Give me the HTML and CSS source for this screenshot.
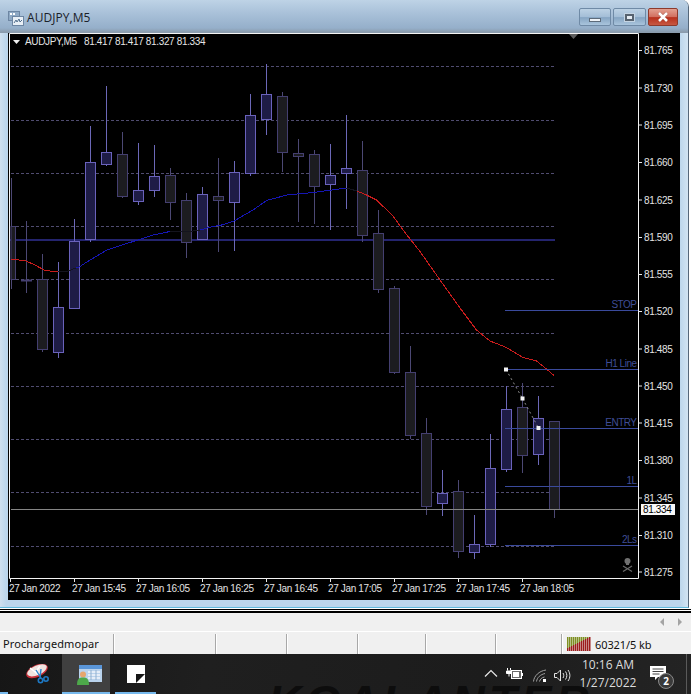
FILE: index.html
```html
<!DOCTYPE html>
<html lang="en">
<head>
<meta charset="utf-8">
<title>AUDJPY,M5</title>
<link rel="stylesheet" href="styles.css">
</head>
<body>
<div class="desk">
  <div class="window">
    <div class="titlebar">
      <svg class="app-icon" width="16" height="16" viewBox="0 0 16 16">
        <rect x="0.5" y="1.5" width="11" height="9" fill="#8fa9c4" stroke="#6d86a3"/>
        <rect x="2" y="3" width="2" height="2" fill="#fff"/><rect x="5" y="3" width="2" height="2" fill="#fff"/>
        <rect x="4.5" y="6.5" width="11" height="9" fill="#e8eff6" stroke="#6d86a3"/>
        <path d="M6 13l2-3 1 2 2-3 1 3 2-2" fill="none" stroke="#52708f"/>
      </svg>
      <span class="title">AUDJPY,M5</span>
      <div class="winbtns">
        <div class="winbtn min"><span class="glyph-min"></span></div>
        <div class="winbtn max"><span class="glyph-max"></span></div>
        <div class="winbtn close">
          <svg width="12" height="10" viewBox="0 0 12 10"><path d="M2 1l8 8M10 1l-8 8" stroke="#6e2a20" stroke-width="3.600" opacity=".45"/><path d="M2 1l8 8M10 1l-8 8" stroke="#fff" stroke-width="2.600"/></svg>
        </div>
      </div>
    </div>
    <div class="chart">
      <svg id="plot" class="plot" width="672" height="567" viewBox="8 33 672 567"></svg>
    </div>
  </div>
  <div class="rule"></div>
  <div class="scrollrow">
    <span class="arrow left"></span>
    <span class="arrow right"></span>
  </div>
  <div class="status">
    <div class="cell name">Prochargedmopar</div>
    <div class="cell w102"></div>
    <div class="cell w71"></div>
    <div class="cell w71"></div>
    <div class="cell w68"></div>
    <div class="cell w70"></div>
    <div class="cell w66"></div>
    <div class="cell conn">
      <svg id="bars" width="24" height="14" viewBox="0 0 24 14"></svg>
      <span>60321/5 kb</span>
    </div>
  </div>
  <div class="taskbar">
    <span class="watermark">KGALANTER</span>
    <div class="apps">
      <div class="start-stub"></div>
      <div class="tb-app snip">
        <svg width="26" height="26" viewBox="0 0 26 26">
          <ellipse cx="12" cy="7" rx="11.500" ry="6" transform="rotate(-24 12 7)" fill="#c9303a"/>
          <ellipse cx="12" cy="6.300" rx="10.500" ry="4.800" transform="rotate(-24 12 6.300)" fill="#efe4e0"/>
          <path d="M5 4l9 7M15 2l-5 7" stroke="#fff" stroke-width="1.400"/>
          <path d="M11 6l5 8M16 5l-1 9" stroke="#2a86cf" stroke-width="1.400"/>
          <circle cx="15.500" cy="16.500" r="2.200" fill="none" stroke="#1d78c4" stroke-width="1.600"/>
          <circle cx="21" cy="15" r="2.200" fill="none" stroke="#1d78c4" stroke-width="1.600"/>
        </svg>
      </div>
      <div class="tb-app active">
        <svg width="25" height="20" viewBox="0 0 25 20">
          <rect x="2" y="0" width="23" height="17" fill="#b9d2ec"/>
          <rect x="2" y="0" width="23" height="4" fill="#5a96d8"/>
          <path d="M11 7h12M11 10h12M11 13h12" stroke="#f2f6fb" stroke-width="1.500"/>
          <path d="M14 5v10M19 5v10" stroke="#8fb0d0"/>
          <circle cx="6" cy="9.500" r="3" fill="#e6a66e"/>
          <path d="M0 20c0-6 2-7.500 6-7.500s6 1.500 6 7.500z" fill="#4da84a"/>
        </svg>
      </div>
      <div class="tb-app third">
        <svg width="18" height="18" viewBox="0 0 18 18">
          <rect width="18" height="18" fill="#fff"/>
          <path d="M9 9H18L9 18z" fill="#161616"/>
        </svg>
      </div>
    </div>
    <div class="tray">
      <svg class="chev" width="14" height="8" viewBox="0 0 14 8"><path d="M1 7.500l6-6 6 6" fill="none" stroke="#e8e8e8" stroke-width="1.200"/></svg>
      <svg class="batt" width="17" height="12" viewBox="0 0 17 12">
        <path d="M1.500 0v2.500M4.500 0v2.500" stroke="#fff"/>
        <path d="M0.500 3h5v2.500h-5zM3 5.500v3" stroke="#fff" fill="#fff"/>
        <rect x="5.500" y="2.500" width="10" height="8" fill="#6a6a6a" stroke="#fff"/><rect x="7" y="4" width="6" height="5" fill="#fff"/><rect x="15.500" y="5" width="1.500" height="3" fill="#fff"/>
      </svg>
      <svg class="wifi" width="14" height="13" viewBox="0 0 14 13">
        <path d="M0.500 12.500C1 7 6 2 13 1M3.500 12.500c.5-4 4-7 8.500-8M6.500 12.500c.5-2 2-4 5-4.500" fill="none" stroke="#a0a0a0"/>
        <rect x="10" y="10" width="3" height="3" fill="#fff"/>
      </svg>
      <svg class="vol" width="17" height="13" viewBox="0 0 17 13">
        <path d="M0.500 4.500h2.500l3.500-3.500v11l-3.500-3.500h-2.500z" fill="none" stroke="#e6e6e6"/>
        <path d="M9 4c1 1.500 1 3.500 0 5M11.500 2.500c1.800 2.500 1.800 5.500 0 8M14 1c2.500 3.500 2.500 7.500 0 11" fill="none" stroke="#e6e6e6"/>
      </svg>
      <div class="clock"><span>10:16 AM</span><span>1/27/2022</span></div>
      <div class="notif">
        <svg width="17" height="15" viewBox="0 0 17 15"><path d="M0 0h16v11H8l-3 3v-3H0z" fill="#fff"/><path d="M2.500 3h11M2.500 5.500h11M2.500 8h7" stroke="#444"/></svg>
        <span class="badge">2</span>
      </div>
    </div>
  </div>
</div>
<script src="chart.js"></script>
</body>
</html>
```
FILE: styles.css
```css
* { box-sizing: border-box; }
html, body { margin: 0; padding: 0; }
body { width: 691px; height: 694px; overflow: hidden; background: #fff; font-family: "Liberation Sans", Arial, sans-serif; }
.desk { display: flex; flex-direction: column; width: 691px; height: 694px; }

.window {
  width: 689px; height: 608px; flex: none;
  padding: 0 8px 8px 6px;
  background: linear-gradient(90deg, #cfe0ef 0, #bcd6ec 6px, #bcd6ec 680px, #d2e4f3 100%);
  border-right: 1px solid #55677a;
  border-bottom: 1px solid #5fb9dc;
  border-top-right-radius: 7px;
  overflow: hidden;
  display: flex; flex-direction: column;
}
.titlebar {
  height: 33px; margin: 0 -8px 0 -6px; padding: 0 3px 0 8px; flex: none;
  display: flex; align-items: flex-start; gap: 3px;
  background: linear-gradient(180deg, #bed3e6 0, #a9c1d9 40%, #95afca 85%, #8b9cad 97%);
}
.app-icon { margin-top: 10px; flex: none; }
.title { font: 12px/17px "Open Sans", sans-serif; letter-spacing: .05px; color: #1a2129; margin-top: 9px; }
.winbtns { margin-left: auto; margin-top: 8px; margin-right: 7px; display: flex; gap: 2px; }
.winbtn { height: 18px; border: 1px solid #6f8aa6; border-radius: 2px; display: flex; align-items: center; justify-content: center;
  background: linear-gradient(180deg, #bcd1e4 0, #a4bed7 48%, #86a5c3 54%, #a9c4dc 100%); }
.winbtn.min { width: 32px; }
.winbtn.max { width: 33px; }
.winbtn.close { width: 30px; border-color: #8d3a2c; background: linear-gradient(180deg, #e3a090 0, #d27060 48%, #b8301c 54%, #c75843 100%); }
.glyph-min { width: 12px; height: 4px; background: #eef3f8; border: 1px solid #5d6b7a; margin-top: 6px; }
.glyph-max { width: 9px; height: 7px; background: #e4ebf2; border: 2px solid #56626f; box-shadow: 0 0 0 1px #c4d4e3; }

.chart { flex: 1; margin: 0 0 0 2px; background: #000; min-height: 0; }
.plot { display: block; }
.plot text { font-family: "Liberation Sans", sans-serif; font-size: 10px; letter-spacing: -.35px; fill: #e4e4e4; }
.plot .lab { fill: #3f4d96; letter-spacing: -.5px; text-anchor: end; }
.plot .boxed { fill: #000; }
.plot .ma { shape-rendering: crispEdges; }

.rule { height: 4px; flex: none; margin-top: 1px; border-top: 1px solid #000; border-bottom: 2px solid #000; background: #fff; }
.scrollrow { height: 18px; flex: none; background: #f0f0f0; display: flex; justify-content: flex-end; align-items: center; gap: 14px; padding-right: 9px; }
.arrow { width: 0; height: 0; border-top: 4px solid transparent; border-bottom: 4px solid transparent; }
.arrow.left { border-right: 4px solid #a4a4a4; }
.arrow.right { border-left: 4px solid #a4a4a4; }

.status { height: 23px; flex: none; background: #f0f0f0; border-top: 1px solid #fff; display: flex; padding-top: 2px; font: 11px/19px "Noto Sans", sans-serif; color: #111; }
.cell { height: 20px; border-right: 1px solid #a8a8a8; box-shadow: 1px 0 0 #fff; flex: none; white-space: nowrap; }
.cell.name { width: 114px; padding-left: 3px; letter-spacing: .1px; }
.w102 { width: 102px; }
.w71 { width: 71px; }
.w68 { width: 68px; }
.w70 { width: 70px; }
.w66 { width: 66px; }
.cell.conn { border: 0; box-shadow: none; padding-left: 5px; display: flex; align-items: center; gap: 4px; letter-spacing: -.1px; }

.taskbar { flex: 1; position: relative; display: flex; justify-content: space-between; background: linear-gradient(100deg, #161616 0, #1f1f1f 30%, #1c1c1c 70%, #242424 100%); overflow: hidden; color: #eee; }
.watermark { position: absolute; left: 268px; top: 25px; font: italic 700 46px/46px "Liberation Sans", sans-serif; letter-spacing: 4px; color: #0d0d0d; white-space: nowrap; }
.apps { display: flex; position: relative; height: 100%; }
.start-stub { width: 8px; border-bottom: 2px solid #76b9ed; }
.tb-app { display: flex; justify-content: center; padding-top: 10px; }
.tb-app.snip { width: 54px; padding-left: 6px; }
.tb-app.active { width: 48px; background: #404040; border-bottom: 2px solid #76b9ed; padding: 11px 0 0 7px; }
.tb-app.third { width: 41px; margin-left: 5px; border-bottom: 2px solid #76b9ed; padding-top: 11px; }
.tray { position: relative; display: flex; align-items: flex-start; padding-right: 4px; }
.chev { margin: 15px 8px 0 0; }
.batt { margin: 14px 10px 0 0; }
.wifi { margin: 15px 7px 0 0; }
.vol { margin: 15px 6px 0 0; }
.clock { display: flex; flex-direction: column; align-items: center; width: 62px; padding-top: 2px; font: 12px/18px "Open Sans", sans-serif; color: #dcdcdc; margin-right: 11px; }
.notif { position: relative; width: 24px; height: 40px; padding-top: 12px; margin-right: 12px; }
.notif svg { display: block; }
.badge { position: absolute; left: 8px; top: 19px; width: 16px; height: 16px; border-radius: 50%; background: #3a3a3a; border: 1px solid #8a8a8a; color: #fff; font: 700 10px/14px "Open Sans", sans-serif; text-align: center; }
.tray::after { content: ""; width: 1px; height: 40px; background: #5a5a5a; }
```
FILE: chart.js
```js
var NS = "http://www.w3.org/2000/svg";
var plot = document.getElementById("plot");
function el(name, attrs, text) {
  var e = document.createElementNS(NS, name);
  for (var k in attrs) e.setAttribute(k, attrs[k]);
  if (text) e.textContent = text;
  plot.appendChild(e);
  return e;
}
function line(x1, y1, x2, y2, c, w, dash) {
  var a = { x1: x1, y1: y1, x2: x2, y2: y2, stroke: c, "stroke-width": w || 1 };
  if (dash) a["stroke-dasharray"] = dash;
  el("line", a);
}
el("rect", { x: 8, y: 33, width: 672, height: 567, fill: "#000" });

[66, 120, 173, 226, 279, 333, 386, 439, 492, 546].forEach(function (y) {
  line(11, y + .5, 555, y + .5, "#504c70", 1, "3 2");
});
line(10, 240, 555, 240, "#24246e", 2);

/* x, bodyTop, bodyBottom, wickTop, wickBottom, bull */
var candles = [
  [10.5, 226, 279, 178, 289, 0], [26.5, 279.5, 280.5, 221, 293, 0],
  [42.5, 279, 349, 254, 352, 0], [58.5, 307, 352, 262, 358, 1],
  [74.5, 241, 308, 219, 309, 1], [90.5, 162, 239, 126, 242, 1],
  [106.5, 152, 164, 86, 166, 1], [122.5, 154, 196, 132, 198, 0],
  [138.5, 190, 201, 143, 205, 1], [154.5, 176, 190, 145, 197, 1],
  [170.5, 175, 202, 168, 220, 0], [186.5, 200, 242, 193, 258, 0],
  [202.5, 194, 239, 187, 239, 1], [218.5, 196, 200, 158, 252, 0],
  [234.5, 172, 202, 161, 251, 1], [250.5, 115, 173, 94, 176, 1],
  [266.5, 94, 119, 64, 135, 1], [282.5, 96, 152, 92, 172, 0],
  [298.5, 153, 156, 139, 222, 0], [314.5, 154, 186, 150, 224, 0],
  [330.5, 175, 184, 144, 230, 1], [346.5, 168, 173, 115, 209, 1],
  [362.5, 170, 235, 141, 242, 0], [378.5, 233, 289, 210, 293, 0],
  [394.5, 288, 372, 286, 374, 0], [410.5, 372, 435, 346, 439, 0],
  [426.5, 433, 506, 418, 515, 0], [442.5, 493, 503, 470, 516, 1],
  [458.5, 491, 551, 480, 558, 0], [474.5, 544, 552, 515, 559, 1],
  [490.5, 468, 544, 434, 547, 1], [506.5, 409, 469, 386, 472, 1],
  [522.5, 407, 455, 383, 473, 0], [538.5, 418, 454, 396, 465, 1],
  [554.5, 421, 509, 421, 518, 0]
];
candles.forEach(function (c) {
  var st = c[5] ? "#6a62bc" : "#443f70";
  var wk = c[5] ? "#6c68b8" : "#4c4874";
  var fl = c[5] ? "#1e1c46" : "#1c1c20";
  line(Math.max(c[0], 11.5), c[3], Math.max(c[0], 11.5), c[4], wk, 1);
  var left = Math.max(c[0] - 5, 11);
  el("rect", { x: left, y: c[1] + .5, width: c[0] + 5 - left, height: c[2] - c[1], fill: fl, stroke: st, "stroke-width": 1 });
});

function pl(points, color) {
  el("polyline", { class: "ma", points: points, fill: "none", stroke: color, "stroke-width": 1 });
}
pl("11,259 26,261 35,265 44,270 50,271 58,272", "#c81c1c");
pl("58,272 68,271 76,268", "#14141e");
pl("76,268 80,266.500 90,260 107,250 133,241.500 153,235 170,231.500", "#1616b4");
pl("170,231.500 187,232 200,230", "#14141e");
pl("200,230 213,226.500 220,225.500 234,221 253,210 266.500,200.500 287,195 313,192.500 346.500,188", "#1616b4");
pl("346.500,188 357,191", "#14141e");
pl("357,191 366.500,195 376.500,200 393,216 403,230 420,251.500 440,280 460,308 476.500,330 490,341 506.500,347.500 523,357.500 536.500,361 546.500,369 554,375.500", "#c81c1c");

[[310, "STOP"], [369, "H1 Line"], [428, "ENTRY"], [486, "1L"], [545, "2Ls"]].forEach(function (h) {
  line(505, h[0] + .5, 638, h[0] + .5, "#3a4a9c", 1);
  el("text", { class: "lab", x: 636.5, y: h[0] - 2 }, h[1]);
});

line(506, 369.500, 522.500, 398.500, "#8f8f8f", 1, "2 3");
line(522.500, 398.500, 538.500, 428, "#8f8f8f", 1, "2 3");
[[506, 369.500], [522.500, 398.500], [538.500, 428]].forEach(function (p) {
  el("rect", { x: p[0] - 2, y: p[1] - 2, width: 4, height: 4, fill: "#f4f4f4" });
});

line(11, 509.500, 638, 509.500, "#858585", 1);

/* frame of the plot area */
el("path", { d: "M9.500 33.500H638.500V578.500H9.500Z", fill: "none", stroke: "#f4f4f4", "stroke-width": 1 });
el("path", { d: "M569 34h9l-4.500 5z", fill: "#5e5e5e" });
el("path", { d: "M13 40h7l-3.500 4z", fill: "#f0f0f0" });
el("text", { x: 25, y: 45 }, "AUDJPY,M5");
el("text", { x: 84, y: 45 }, "81.417 81.417 81.327 81.334");

var prices = [[50.500, "81.765"], [88, "81.730"], [125, "81.695"], [162.500, "81.660"], [200, "81.625"],
  [237.500, "81.590"], [274.500, "81.555"], [311.500, "81.520"], [349, "81.485"], [386, "81.450"],
  [423, "81.415"], [460.500, "81.380"], [498, "81.345"], [535.500, "81.310"], [572, "81.275"]];
prices.forEach(function (p) {
  line(638, p[0], 642, p[0], "#e8e8e8", 1);
  el("text", { x: 644, y: p[0] + 3.500 }, p[1]);
});
el("rect", { x: 641, y: 504, width: 34, height: 11, fill: "#f8f8f8" });
el("text", { class: "boxed", x: 643, y: 513 }, "81.334");

var times = ["27 Jan 2022", "27 Jan 15:45", "27 Jan 16:05", "27 Jan 16:25", "27 Jan 16:45", "27 Jan 17:05", "27 Jan 17:25", "27 Jan 17:45", "27 Jan 18:05"];
times.forEach(function (t, i) {
  var x = 10.500 + 64 * i;
  line(x, 578, x, 582, "#e8e8e8", 1);
  el("text", { x: i ? x - 2.500 : 9, y: 592 }, t);
});

/* skull marker */
el("circle", { cx: 627.500, cy: 561, r: 3, fill: "#707070" });
el("rect", { x: 626, y: 563, width: 3, height: 2, fill: "#707070" });
el("path", { d: "M623 566l9 5.500M632 566l-9 5.500", stroke: "#6a6a6a", "stroke-width": 1.300 });

/* connection bars */
plot = document.getElementById("bars");
for (var i = 0; i < 12; i++) {
  var h = 3 + i;
  el("rect", { x: i * 2, y: 0, width: 1.500, height: 14 - h, fill: "#7e8f22" });
  el("rect", { x: i * 2, y: 14 - h, width: 1.500, height: h, fill: "#9c1c1c" });
}
```
